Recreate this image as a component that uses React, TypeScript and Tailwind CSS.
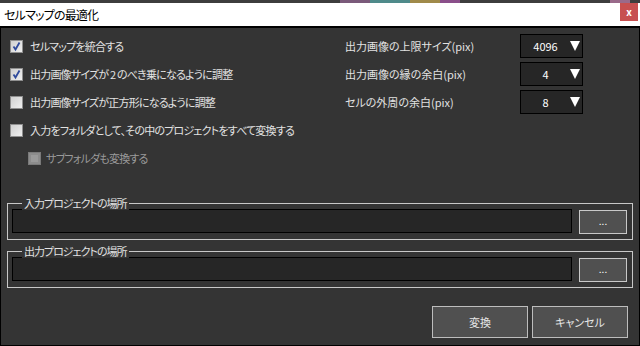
import type { ReactNode } from 'react'

const leftRows = [
  { label: 'セルマップを統合する', checked: true },
  { label: '出力画像サイズが 2 のべき乗になるように調整', checked: true },
  { label: '出力画像サイズが正方形になるように調整', checked: false },
  { label: '入力をフォルダとして、その中のプロジェクトをすべて変換する', checked: false },
]

const rightRows = [
  { label: '出力画像の上限サイズ(pix)', value: '4096' },
  { label: '出力画像の縁の余白(pix)', value: '4' },
  { label: 'セルの外周の余白(pix)', value: '8' },
]

function CheckBox({ checked, disabled }: { checked?: boolean; disabled?: boolean }) {
  if (disabled) {
    return <div className="w-[13px] h-[13px] shrink-0 border border-[#7a7a7a] bg-[#8c8c8c] p-[2px]"><div className="w-full h-full bg-[#9a9a9a]" /></div>
  }
  return (
    <div className="w-[13px] h-[13px] shrink-0 border border-[#8f8f8f] bg-gradient-to-br from-[#d0d0d0] to-[#efefef] flex items-center justify-center">
      {checked && (
        <svg width="11" height="11" viewBox="0 0 11 11">
          <path d="M2.5 5.5 L4.5 8.5 L8.5 1.5" fill="none" stroke="#2f4a9c" strokeWidth="1.8" />
        </svg>
      )}
    </div>
  )
}

function Group({ title }: { title: string }) {
  return (
    <div className="relative border border-[#c8c8c8] mx-[6px] pt-[5px] pb-[5px] pl-[4px] pr-[5px]">
      <span className="absolute -top-[8px] left-[14px] px-[2px] bg-[#343434] text-[11px] leading-[14px] tracking-[-1px] text-[#e2e2e2]">{title}</span>
      <div className="flex items-start gap-[7px]">
        <div className="flex-1 h-[24px] bg-[#262626] border border-black" />
        <button className="w-[48px] h-[24px] mt-[1px] bg-[#505050] border border-[#c8c8c8] text-[10px] leading-none text-white flex items-end justify-center pb-[7px]">
          ...
        </button>
      </div>
    </div>
  )
}

function Row({ children, className = '' }: { children: ReactNode; className?: string }) {
  return <div className={`h-[28px] flex items-center ${className}`}>{children}</div>
}

export default function App() {
  return (
    <div className="w-[640px] h-[346px] flex flex-col overflow-hidden font-['Noto_Sans_CJK_JP',sans-serif] [font-feature-settings:'palt']">
      <div className="h-[3px] flex bg-[#3d3d3d]">
        <div className="w-[340px]" />
        <div className="w-[30px] bg-[#7a5a7a]" />
        <div className="w-[40px] bg-[#4f8a8a]" />
        <div className="w-[30px] bg-[#a08a4a]" />
        <div className="w-[20px] bg-[#8a4f8a]" />
        <div className="w-[150px]" />
        <div className="w-[20px] bg-[#9a6a8a]" />
      </div>
      <div className="h-[23px] bg-white flex items-start justify-between pl-[4px] pr-[2px]">
        <span className="text-[12px] leading-[23px] tracking-[-0.8px] text-black">セルマップの最適化</span>
        <div className="w-[18px] h-[18px] bg-[#c75050] flex items-center justify-center text-white text-[10px] font-bold leading-none">x</div>
      </div>
      <div className="h-[2px] bg-black" />
      <div className="flex-1 flex flex-col bg-[#343434] border-x border-b border-black">
        <div className="flex pt-[4px]">
          <div className="flex-1 pl-[9px]">
            {leftRows.map((r) => (
              <Row key={r.label}>
                <CheckBox checked={r.checked} />
                <span className="ml-[7px] text-[11px] tracking-[-0.8px] text-[#e2e2e2]">{r.label}</span>
              </Row>
            ))}
            <Row className="pl-[18px]">
              <CheckBox disabled />
              <span className="ml-[5px] text-[11px] tracking-[-0.8px] text-[#9a9a9a]">サブフォルダも変換する</span>
            </Row>
          </div>
          <div className="w-[294px] pr-[56px]">
            {rightRows.map((r) => (
              <Row key={r.label}>
                <span className="w-[175px] text-[11px] text-[#e2e2e2]">{r.label}</span>
                <div className="w-[63px] h-[24px] bg-[#262626] border border-black flex items-center">
                  <span className="flex-1 text-center text-[11px] text-white">{r.value}</span>
                  <svg width="10" height="10" viewBox="0 0 10 10" className="mr-[2px]">
                    <path d="M0 0 H10 L5 10 Z" fill="#ffffff" />
                  </svg>
                </div>
              </Row>
            ))}
          </div>
        </div>
        <div className="mt-[31px]">
          <Group title="入力プロジェクトの場所" />
        </div>
        <div className="mt-[11px]">
          <Group title="出力プロジェクトの場所" />
        </div>
        <div className="mt-[18px] flex justify-end gap-[4px] pr-[11px]">
          <button className="w-[96px] h-[32px] bg-[#505050] border border-[#bdbdbd] text-[11px] text-[#e6e6e6]">変換</button>
          <button className="w-[96px] h-[32px] bg-[#505050] border border-[#bdbdbd] text-[11px] text-[#e6e6e6]">キャンセル</button>
        </div>
      </div>
    </div>
  )
}
